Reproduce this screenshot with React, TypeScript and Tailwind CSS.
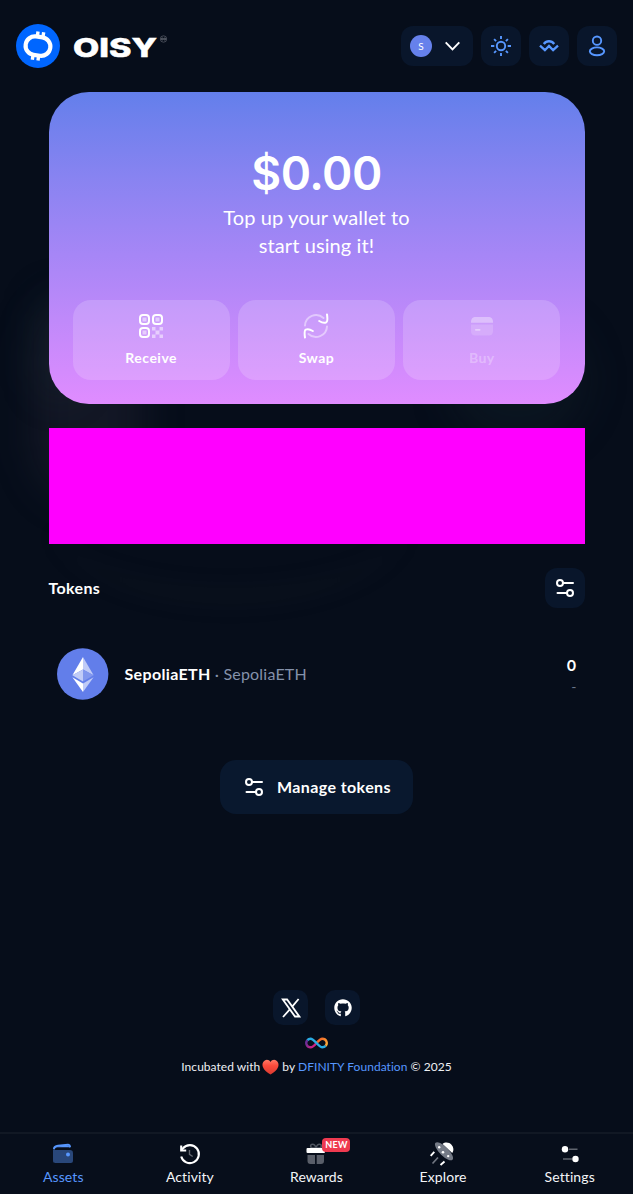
import type { ReactNode } from 'react';
import { FaGithub } from 'react-icons/fa';

function LogoMark() {
  return (
    <svg width="44" height="44" viewBox="0 0 44 44" fill="none">
      <circle cx="22" cy="22" r="22" fill="#0066ff" />
      <g transform="rotate(8 22 22)" stroke="#fff">
        <rect x="9.6" y="12.8" width="24.8" height="18.6" rx="9.2" strokeWidth="4.2" />
        <path d="M20 7.600V13M25.700 7.600V13M18.300 31v5.400M24 31v5.400" strokeWidth="3.4" />
      </g>
    </svg>
  );
}

function Wordmark() {
  return (
    <svg width="100" height="44" viewBox="0 0 100 44" fill="none">
      <text x="1" y="33.200" textLength="84" lengthAdjust="spacingAndGlyphs" fill="#fff" stroke="#fff" strokeWidth="0.5" className="font-['Inter'] text-[25.5px] font-extrabold">OISY</text>
      <circle cx="91.500" cy="15" r="3.2" stroke="#5d626d" strokeWidth="0.7" />
      <path d="M91.500 15c-.8-1.300-2-1.300-2 0s1.200 1.300 2 0 2-1.300 2 0-1.200 1.300-2 0Z" stroke="#8b8f98" strokeWidth="0.7" />
    </svg>
  );
}

function Sun() {
  return (
    <svg width="24" height="24" viewBox="0 0 24 24" fill="none" stroke="#5797ff" strokeWidth="1.9">
      <circle cx="12" cy="12" r="4.200" />
      <path d="M12 2v3M12 19v3M2 12h3.300M18.700 12H22M5.100 5.100l2 2M16.900 16.900l2 2M18.900 5.100l-2 2M7.100 16.900l-2 2" />
    </svg>
  );
}

function WalletConnect() {
  return (
    <svg width="24" height="24" viewBox="0 0 24 24" fill="none" stroke="#5797ff" strokeWidth="2.300">
      <path d="M6.800 10c2.700-3.700 7.700-3.700 10.400 0" />
      <path d="M3 11.700l4.900 4.500 4.100-4.300 4.100 4.300 4.900-4.500" />
    </svg>
  );
}

function Person() {
  return (
    <svg width="24" height="24" viewBox="0 0 24 24" fill="none" stroke="#5797ff" strokeWidth="1.900">
      <circle cx="12" cy="6.700" r="4.200" />
      <ellipse cx="12" cy="17.300" rx="7.200" ry="3.900" />
    </svg>
  );
}

function Sliders() {
  return (
    <svg width="20" height="20" viewBox="0 0 20 20" fill="none" stroke="#fff" strokeWidth="2" strokeLinecap="round">
      <circle cx="5" cy="5" r="3" />
      <path d="M8.500 5H18M2.500 15H11.500" />
      <circle cx="15" cy="15" r="3" />
    </svg>
  );
}

function QrIcon() {
  return (
    <svg width="24" height="24" viewBox="0 0 24 24" fill="none">
      <g stroke="#fff" strokeWidth="2">
        <rect x="1" y="1" width="9" height="9" rx="3" />
        <rect x="14" y="1" width="9" height="9" rx="3" />
        <rect x="1" y="14" width="9" height="9" rx="3" />
      </g>
      <path fill="#fff" fillOpacity=".5" d="M3.500 3.500h4v4h-4zM16.500 3.500h4v4h-4zM3.500 16.500h4v4h-4zM13 13h3.500v3.500H13zM20.500 13H24v3.500h-3.500zM16.500 16.500h4v4h-4zM13 20.500h3.500V24H13zM20.500 20.500H24V24h-3.500z" />
    </svg>
  );
}

function SwapIcon() {
  return (
    <svg width="26" height="26" viewBox="0 0 26 26" fill="none" strokeWidth="2" strokeLinecap="round">
      <path stroke="#fff" strokeOpacity=".45" d="M2 12.500A11 11 0 0 1 20.500 5M24 13.500A11 11 0 0 1 5.500 21" />
      <path stroke="#fff" d="M24 1.500c.6 4 .9 7-.8 7.800-1.500.7-4 .5-7-1.300M2 24.500c-.6-4-.9-7 .8-7.800 1.500-.7 4-.5 7 1.300" />
    </svg>
  );
}

function CardIcon() {
  return (
    <svg width="24" height="24" viewBox="0 0 24 24">
      <path fill="#fff" fillOpacity=".36" d="M1 8.500c0-4 1.500-5.500 5-5.500h12c3.500 0 5 1.500 5 5.500v.3H1z" />
      <path fill="#fff" fillOpacity=".16" d="M1 10.500h22V17c0 3.200-1.500 4.500-5 4.500H6c-3.500 0-5-1.300-5-4.500z" />
      <rect x="5" y="15" width="5.500" height="1.800" rx=".8" fill="#fff" fillOpacity=".4" />
    </svg>
  );
}

function Ethereum() {
  return (
    <svg width="52" height="52" viewBox="0 0 52 52">
      <circle cx="25.700" cy="26" r="25.700" fill="#627eea" />
      <path fill="#fff" d="M26 9v12.600l-10.600 5.700z" />
      <path fill="#c0cbf7" d="M26 9l10.600 18.300L26 21.600z" />
      <path fill="#c0cbf7" d="M26 21.600v11.900l-10.600-6.200z" />
      <path fill="#8197ee" d="M26 21.600l10.600 5.700L26 33.500z" />
      <path fill="#fff" d="M15.400 29.300L26 35.500V44z" />
      <path fill="#c0cbf7" d="M36.600 29.300L26 35.500V44z" />
    </svg>
  );
}

function XLogo() {
  return (
    <svg width="20" height="20" viewBox="0 0 20 20" fill="none" stroke="#fff">
      <path strokeWidth="1.800" d="M1.800 1.500h4.300l12.200 17h-4.300z" />
      <path strokeWidth="1.800" d="M17.600 1L11.200 8.600M8.600 11.700L2 19" />
    </svg>
  );
}

function Infinity() {
  return (
    <svg width="23" height="12" viewBox="0 0 24 12" fill="none" strokeWidth="2.500">
      <defs>
        <linearGradient id="loop-left" x1="1" y1="2" x2="11" y2="11" gradientUnits="userSpaceOnUse">
          <stop offset=".2" stopColor="#6a2d98" />
          <stop offset="1" stopColor="#ed1e79" />
        </linearGradient>
        <linearGradient id="loop-right" x1="13" y1="2" x2="23" y2="9" gradientUnits="userSpaceOnUse">
          <stop stopColor="#f15a24" />
          <stop offset="1" stopColor="#fbb03b" />
        </linearGradient>
      </defs>
      <path stroke="url(#loop-left)" d="M12 6C9.500 9 8 10.500 5.800 10.500A4.500 4.500 0 0 1 2.500 3" />
      <path stroke="url(#loop-right)" d="M12 6c2.500-3 4-4.500 6.200-4.500A4.500 4.500 0 0 1 21.500 9" />
      <path stroke="#29abe2" d="M2.500 3A4.500 4.500 0 0 1 5.800 1.500C10 1.500 14 10.500 18.200 10.500A4.500 4.500 0 0 0 21.500 9" />
    </svg>
  );
}

function Heart() {
  return (
    <svg width="17" height="17" viewBox="0 0 17 17">
      <defs>
        <linearGradient id="heart" x1="0" y1="0" x2="0" y2="1">
          <stop stopColor="#ff7a66" />
          <stop offset=".4" stopColor="#fb4b3c" />
          <stop offset="1" stopColor="#d93a30" />
        </linearGradient>
      </defs>
      <path fill="url(#heart)" d="M8.500 3C7.300.8 4.800.3 2.800 1.400.6 2.600 0 5.300.8 7.700c1.200 3.600 4.500 5.700 7.700 7.800 3.200-2.100 6.500-4.200 7.700-7.800.8-2.400.2-5.100-2-6.300C12.200.3 9.700.8 8.500 3z" />
    </svg>
  );
}

function WalletIcon() {
  return (
    <svg width="24" height="24" viewBox="0 0 24 24" fill="none">
      <path fill="#5797ff" fillOpacity=".42" d="M2 7.500c1 .7 2 .5 3.500.5H18c3.300 0 4 1 4 3.500V18c0 3-1 3-4 3H6c-3 0-4 0-4-3z" />
      <path stroke="#5797ff" strokeWidth="2" strokeLinecap="round" d="M3 6.500C3.300 4.500 4.500 4.100 7 3.800l10-1.100c1.300-.1 1.800.4 2 1.800" />
      <path fill="#5797ff" d="M3 6.500c.5-1.500 2-2 5-2.200l9-.8 2 1.700H7C5 5.200 4 5.500 3 6.500z" />
      <circle cx="17" cy="12.500" r="2" fill="#5797ff" />
    </svg>
  );
}

function HistoryIcon() {
  return (
    <svg width="24" height="24" viewBox="0 0 24 24" fill="none" stroke="#fff" strokeWidth="2.100">
      <path d="M3.200 14.500A9 9 0 1 0 5 6.300L3.300 8.200" />
      <path d="M3.200 3.500v5h5" />
      <path stroke="#62666f" strokeWidth="1.400" d="M11.500 8v4.300l3.200 2.200" />
    </svg>
  );
}

function GiftIcon() {
  return (
    <svg width="24" height="24" viewBox="0 0 24 24" fill="none">
      <path stroke="#4e545f" strokeWidth="1.500" d="M12 6H8.500C6 6 6 2.200 8.500 2.200S12 6 12 6zM12 6h3.500c2.500 0 2.500-3.800 0-3.800S12 6 12 6z" />
      <rect x="2.500" y="6" width="18.500" height="5" rx="1" fill="#fff" />
      <path fill="#595e69" d="M3.500 13H11v9H6.500c-2 0-3-1-3-3zM12.700 13h7.300v6c0 2-1 3-3 3h-4.300z" />
    </svg>
  );
}

function SaucerIcon() {
  return (
    <svg width="24" height="24" viewBox="0 0 24 24" fill="none" className="overflow-visible">
      <path fill="#fff" d="M11.500 2c3-2.500 7-1.500 9 .8 2 2.200 2.700 5.800.7 8.200z" />
      <ellipse cx="13" cy="9.300" rx="4.400" ry="12" transform="rotate(-45 13 9.300)" fill="#747a86" />
      <g fill="#fff"><circle cx="8.200" cy="5.300" r="1.200" /><circle cx="12" cy="10.300" r="1.300" /><circle cx="17.200" cy="14.100" r="1.200" /></g>
      <path stroke="#fff" strokeWidth="1.900" d="M3.300 9.800L-.3 13.800M13.500 19.500L9.500 23" />
      <path stroke="#717681" strokeWidth="1.700" d="M7 15.500L1.500 21.500" />
    </svg>
  );
}

function SettingsIcon() {
  return (
    <svg width="24" height="24" viewBox="0 0 24 24" fill="none">
      <path stroke="#60656f" strokeWidth="1.500" d="M11 7.300h8.500M5 17h9.500" />
      <circle cx="7" cy="7.300" r="3.200" fill="#fff" />
      <circle cx="17.500" cy="17" r="3.200" fill="#fff" />
    </svg>
  );
}

function SquareButton({ children }: { children: ReactNode }) {
  return <button className="flex size-10 items-center justify-center rounded-[12px] bg-[#09162b]">{children}</button>;
}

function ActionTile({ icon, label, disabled }: { icon: ReactNode; label: string; disabled?: boolean }) {
  return (
    <button className="flex h-20 flex-1 flex-col items-center rounded-[18px] bg-white/17 pt-[13px]">
      <span className="flex h-[26px] items-center">{icon}</span>
      <span className={`mt-[9px] text-[14px] leading-5 font-bold tracking-[0.5px] ${disabled ? 'text-white/30' : 'text-white'}`}>{label}</span>
    </button>
  );
}

function NavItem({ icon, label, active, badge }: { icon: ReactNode; label: string; active?: boolean; badge?: string }) {
  return (
    <a className={`flex flex-1 flex-col items-center pt-2 ${active ? 'text-[#5797ff]' : 'text-[#f3f5f8]'}`}>
      <span className="relative">
        {icon}
        {badge && (
          <span className="absolute -top-[4px] left-[18px] flex h-[14px] w-7 items-center justify-center rounded-[4px] bg-[#ef3a50] text-[9px] font-bold tracking-[0.3px] text-white">{badge}</span>
        )}
      </span>
      <span className="mt-[1px] text-[14px] leading-5 tracking-[0.1px]">{label}</span>
    </a>
  );
}

export default function App() {
  return (
    <div className="relative isolate flex h-[1194px] w-full flex-col overflow-hidden bg-[#060d1a] font-['Lato','Liberation_Sans',sans-serif] text-white">
      <div className="pointer-events-none absolute inset-0 -z-10">
        <div className="absolute top-[300px] left-[34px] h-[200px] w-[108px] rounded-full bg-[#4a4055]/20 blur-[20px]" />
        <div className="absolute top-[290px] left-[34px] h-[110px] w-[50px] rounded-full bg-[#254046]/14 blur-[18px]" />
        <div className="absolute top-[320px] left-[450px] h-[120px] w-[136px] rounded-full bg-[#1c3036]/22 blur-[20px]" />
        <div className="absolute top-[430px] left-[50px] h-[175px] w-[360px] rounded-[50%] border-b-[18px] border-[#343a3a]/9 blur-[10px]" />
      </div>

      <header className="flex h-[92px] shrink-0 items-center justify-between px-4">
        <div className="flex items-center gap-3">
          <LogoMark />
          <Wordmark />
        </div>
        <div className="flex gap-2">
          <button className="flex h-10 w-18 items-center gap-[13px] rounded-[12px] bg-[#09162b] pl-[9px]">
            <span className="flex size-[22px] items-center justify-center rounded-full bg-[#6681eb] text-[10px]">S</span>
            <svg width="15" height="10" viewBox="0 0 15 10" fill="none" stroke="#fff" strokeWidth="1.900"><path d="M.7 1.300l6.800 7 6.800-7" /></svg>
          </button>
          <SquareButton><Sun /></SquareButton>
          <SquareButton><WalletConnect /></SquareButton>
          <SquareButton><Person /></SquareButton>
        </div>
      </header>

      <main className="mx-auto flex w-[536px] shrink-0 flex-col">
        <section className="flex h-[312px] flex-col items-center justify-between rounded-[40px] bg-linear-to-b from-[#637feb] via-[#a686f6] via-52% to-[#e08cff] p-6">
          <div className="flex flex-col items-center pt-[27px]">
            <h1 className="font-['Inter'] text-[46px] leading-[60px] font-semibold tracking-[-0.5px]">$0.00</h1>
            <p className="w-[220px] text-center text-[20px] leading-7 tracking-[0.1px]">Top up your wallet to<br />start using it!</p>
          </div>
          <div className="flex w-full gap-2">
            <ActionTile icon={<QrIcon />} label="Receive" />
            <ActionTile icon={<SwapIcon />} label="Swap" />
            <ActionTile icon={<CardIcon />} label="Buy" disabled />
          </div>
        </section>

        <div className="mt-6 h-[116px] bg-[#ff00ff]" />

        <div className="mt-6 flex h-10 items-center justify-between">
          <h2 className="text-[16px] font-bold tracking-[0.35px]">Tokens</h2>
          <SquareButton><Sliders /></SquareButton>
        </div>

        <div className="mt-10 flex h-[52px] items-center px-2">
          <Ethereum />
          <p className="ml-4 flex-1 text-[16px]"><b className="tracking-[0.35px]">SepoliaETH</b> <span className="tracking-[0.2px] text-[#8491aa]">· SepoliaETH</span></p>
          <div className="flex flex-col pt-[3px] text-right">
            <span className="font-['Inter'] text-[15px] leading-[22px] font-semibold">0</span>
            <span className="text-[14px] leading-5 text-[#68758c]">-</span>
          </div>
        </div>

        <button className="mt-[60px] flex h-[54px] w-[193px] items-center gap-[13px] self-center rounded-[16px] bg-[#09182e] pl-6 text-[16px] font-bold tracking-[0.4px]">
          <Sliders />
          <span className="whitespace-nowrap">Manage tokens</span>
        </button>
      </main>

      <footer className="mt-44 flex flex-col items-center">
        <div className="flex gap-[17px]">
          <a className="flex size-[35px] items-center justify-center rounded-[10px] bg-[#09162b]"><XLogo /></a>
          <a className="flex size-[35px] items-center justify-center rounded-[10px] bg-[#09162b]"><FaGithub size={18} /></a>
        </div>
        <span className="mt-3"><Infinity /></span>
        <div className="mt-[9px] flex h-[18px] items-center text-[12px] tracking-[0.04px] whitespace-nowrap text-[#eef0f4]">
          <span>Incubated with</span>
          <span className="mr-[3px] ml-[2px]"><Heart /></span>
          <span>by <a className="text-[#5797ff]">DFINITY Foundation</a> © 2025</span>
        </div>
      </footer>

      <nav className="mt-auto flex h-[62px] shrink-0 border-t-2 border-[#111824] bg-[#070e1b]">
        <NavItem icon={<WalletIcon />} label="Assets" active />
        <NavItem icon={<HistoryIcon />} label="Activity" />
        <NavItem icon={<GiftIcon />} label="Rewards" badge="NEW" />
        <NavItem icon={<SaucerIcon />} label="Explore" />
        <NavItem icon={<SettingsIcon />} label="Settings" />
      </nav>
    </div>
  );
}
